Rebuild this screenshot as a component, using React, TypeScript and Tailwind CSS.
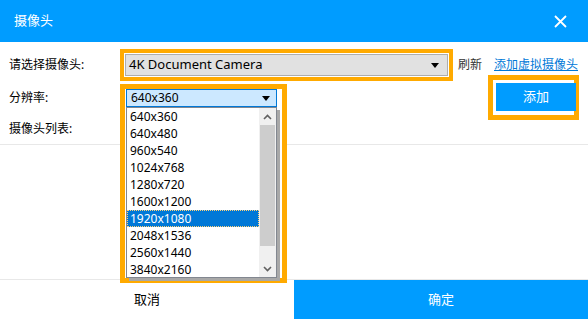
const resolutions = [
  "640x360",
  "640x480",
  "960x540",
  "1024x768",
  "1280x720",
  "1600x1200",
  "1920x1080",
  "2048x1536",
  "2560x1440",
  "3840x2160",
];

const font = "font-['Noto_Sans','Noto_Sans_CJK_SC',sans-serif]";

function Caret() {
  return (
    <svg width="8" height="5" viewBox="0 0 8 5">
      <path d="M0 0h8L4 5z" fill="#000" />
    </svg>
  );
}

function ResolutionDropdown() {
  return (
    <div className="absolute left-0 top-0 w-[167px] h-[199px] border-[5px] border-[#ffaa00] bg-white pl-px z-10">
      <div className="h-[18px] w-[151px] bg-[#cce8ff] border border-[#0078d7] flex items-center justify-between pl-[4px] pr-[6px] text-[12px] text-black">
        <span>640x360</span>
        <Caret />
      </div>
      <div className="w-[151px] h-[171px] border border-[#828790] bg-white flex shadow-[3px_3px_0_#a8a8a8]">
        <ul className="flex-1 text-[12px] text-black">
          {resolutions.map((r) => (
            <li
              key={r}
              className={
                r === "1920x1080"
                  ? "h-[17px] pl-[3px] flex items-center bg-[#0078d7] text-white outline-1 outline-dotted outline-[#ffd27a] -outline-offset-1"
                  : "h-[17px] pl-[3px] flex items-center"
              }
            >
              {r}
            </li>
          ))}
        </ul>
        <div className="w-[17px] bg-[#f0f0f0] flex flex-col">
          <div className="h-[17px] flex items-center justify-center">
            <svg width="9" height="6" viewBox="0 0 9 6">
              <path d="M1 5l3.5-3.5L8 5" stroke="#606060" strokeWidth="1.6" fill="none" />
            </svg>
          </div>
          <div className="h-[121px] mx-px bg-[#cdcdcd]" />
          <div className="flex-1" />
          <div className="h-[17px] flex items-center justify-center">
            <svg width="9" height="6" viewBox="0 0 9 6">
              <path d="M1 1l3.5 3.5L8 1" stroke="#606060" strokeWidth="1.6" fill="none" />
            </svg>
          </div>
        </div>
      </div>
    </div>
  );
}

export default function App() {
  return (
    <div className={`w-[588px] h-[319px] bg-white flex flex-col overflow-hidden ${font}`}>
      <div className="h-[42px] bg-[#009cff] flex items-center justify-between pl-[14px] pr-[21px] shrink-0">
        <span className="text-white text-[13px]">摄像头</span>
        <svg width="13" height="13" viewBox="0 0 13 13">
          <path d="M1 1l11 11M12 1L1 12" stroke="#fff" strokeWidth="1.8" />
        </svg>
      </div>

      <div className="flex-1 flex flex-col text-[12px] text-black">
        <div className="mt-[7px] h-[32px] flex items-center pl-[9px]">
          <span className="w-[111px]">请选择摄像头:</span>
          <div className="w-[333px] h-[32px] border-4 border-[#ffaa00] p-px">
            <div className="h-full bg-[#e1e1e1] border border-[#adadad] flex items-center justify-between pl-[3px] pr-[8px] text-[13px]">
              <span>4K Document Camera</span>
              <Caret />
            </div>
          </div>
          <span className="ml-[5px] text-[#333]">刷新</span>
          <span className="ml-[12px] text-[#0078d7] underline">添加虚拟摄像头</span>
        </div>

        <div className="mt-[3px] h-[23px] flex items-start pl-[9px]">
          <span className="w-[111px] mt-[5px]">分辨率:</span>
          <div className="relative w-[167px] h-[23px]">
            <ResolutionDropdown />
          </div>
          <div className="ml-[201px] -mt-[9px] w-[91px] h-[45px] border-[5px] border-[#ffaa00] pt-[3px] pl-[3px] pb-[4px]">
            <button className="w-[80px] h-[28px] bg-[#009cff] text-white text-[13px]">添加</button>
          </div>
        </div>

        <div className="mt-[13px] pl-[9px] h-[17px] leading-[17px]">摄像头列表:</div>
        <div className="mt-[7px] h-px bg-[#e8e8e8]" />

        <div className="mt-auto border-t border-[#e8e8e8] h-[40px] flex text-[13px]">
          <div className="flex-1 flex items-center justify-center text-black">取消</div>
          <div className="flex-1 flex items-center justify-center bg-[#009cff] text-white">确定</div>
        </div>
      </div>
    </div>
  );
}
